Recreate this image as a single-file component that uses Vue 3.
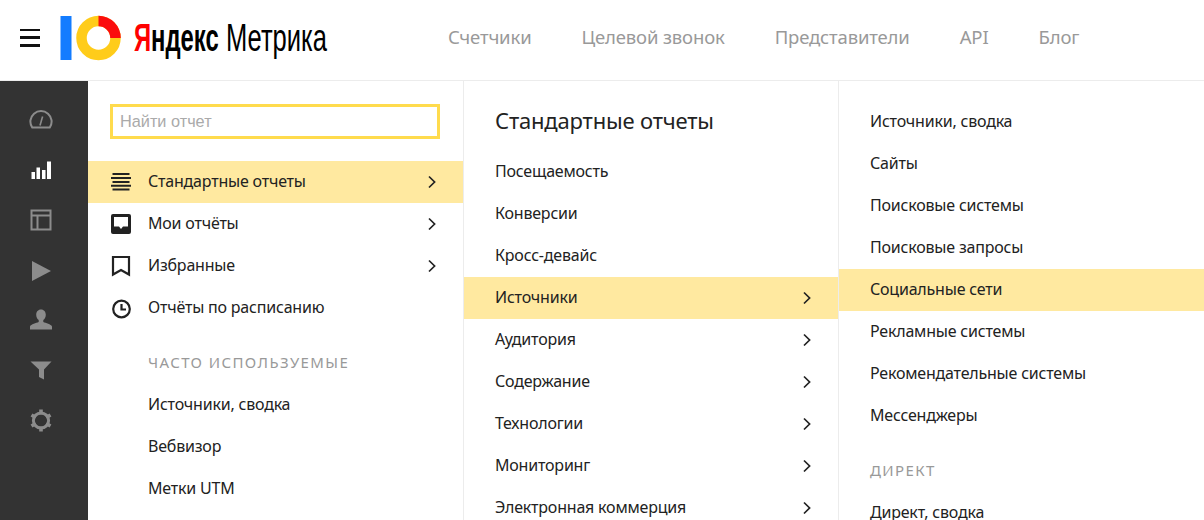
<template>
  <div class="page">
    <header class="top">
      <button class="burger" aria-label="Меню"><span></span><span></span><span></span></button>
      <div class="logo">
        <svg width="62" height="46" viewBox="0 0 62 46">
          <rect x="0.5" y="1" width="11" height="44" fill="#137cff" />
          <circle cx="38.5" cy="23" r="17" fill="none" stroke="#ffcc1a" stroke-width="10.5" />
          <path d="M38.5 0.7A22.3 22.3 0 0 1 60.8 23H50.2A11.7 11.7 0 0 0 38.5 11.3Z" fill="#fb0d0d" />
        </svg>
        <div class="wordmark">
          <span class="ya"><i>Я</i>ндекс</span>
          <span class="metrika">Метрика</span>
        </div>
      </div>
      <nav class="nav">
        <a v-for="item in navItems" :key="item">{{ item }}</a>
      </nav>
    </header>

    <div class="body">
      <aside class="rail">
        <div v-for="(icon, i) in railIcons" :key="i" class="rail-item" :class="{ active: i === 1 }">
          <svg width="24" height="24" viewBox="0 0 24 24" v-html="icon"></svg>
        </div>
      </aside>

      <section class="col col-1">
        <div class="search"><input type="text" placeholder="Найти отчет" /></div>
        <div v-for="row in mainRows" :key="row.label" class="row" :class="{ on: row.on }">
          <svg class="row-icon" width="22" height="22" viewBox="0 0 22 22" v-html="row.icon"></svg>
          <span>{{ row.label }}</span>
          <svg v-if="row.arrow" class="chev" width="10" height="14" viewBox="0 0 10 14"><path d="M2 1.5 7.6 7 2 12.5" /></svg>
        </div>
        <h4 class="caption caption-1">Часто используемые</h4>
        <div v-for="label in frequent" :key="label" class="row"><span>{{ label }}</span></div>
      </section>

      <section class="col col-2">
        <h2>Стандартные отчеты</h2>
        <div v-for="row in reports" :key="row.label" class="row" :class="{ on: row.on }">
          <span>{{ row.label }}</span>
          <svg v-if="row.arrow" class="chev" width="10" height="14" viewBox="0 0 10 14"><path d="M2 1.5 7.6 7 2 12.5" /></svg>
        </div>
      </section>

      <section class="col col-3">
        <div v-for="label in sources" :key="label" class="row" :class="{ on: label === 'Социальные сети' }"><span>{{ label }}</span></div>
        <h4 class="caption caption-3">Директ</h4>
        <div class="row"><span>Директ, сводка</span></div>
      </section>
    </div>
  </div>
</template>

<script setup>
const navItems = ['Счетчики', 'Целевой звонок', 'Представители', 'API', 'Блог']

const railIcons = [
  '<path d="M3.200 19.500a10.600 10.600 0 1 1 17.600 0Z" fill="none" stroke="#8c8c8c" stroke-width="2"/><path d="M11 17.500 13.600 8.500" stroke="#8c8c8c" stroke-width="1.600"/>',
  '<path d="M2.500 14h3.500v7H2.500zM7.500 9.500H11V21H7.500zM13 12h3.500v9H13zM18 3.500h4V21h-4z" fill="#fff"/>',
  '<path d="M2.500 2.500h19v19h-19zM2.500 7.500h19M8.500 7.500v14" fill="none" stroke="#8c8c8c" stroke-width="2"/>',
  '<path d="M3 3 22 13 3 23Z" fill="#8c8c8c"/>',
  '<path d="M12 1.500c3 0 4.800 2.300 4.800 5.200 0 2.400-1.200 4.400-2.500 5.400v2c2.500 1 7.700 2.200 8.700 4.300V21.500H1v-3.100c1-2.100 6.200-3.300 8.700-4.300v-2C8.400 11.100 7.200 9.100 7.200 6.700c0-2.900 1.800-5.200 4.800-5.200Z" fill="#8c8c8c"/>',
  '<path d="M1.500 3.500h21l-7.500 8v10l-5-2.500v-7.500Z" fill="#8c8c8c"/>',
  '<circle cx="12" cy="12.500" r="7.600" fill="none" stroke="#8c8c8c" stroke-width="3"/><path d="M12 1.500v5M12 18.500v5M2.500 7l4.300 2.500M17.200 15.500l4.300 2.500M2.500 18l4.300-2.500M17.200 9.500 21.500 7" stroke="#8c8c8c" stroke-width="3.600"/>'
]

const mainRows = [
  { label: 'Стандартные отчеты', on: true, arrow: true, icon: '<path d="M2.500 3h17M1 7h20M2.500 11h17M1 14.800h20M2.500 18.600h17" stroke="#222" stroke-width="2"/>' },
  { label: 'Мои отчёты', arrow: true, icon: '<path fill-rule="evenodd" d="M3 1h16a2 2 0 0 1 2 2v16a2 2 0 0 1-2 2H3a2 2 0 0 1-2-2V3a2 2 0 0 1 2-2Zm1 3v9.500h5l2 2.500 2-2.500h5V4Z" fill="#222"/>' },
  { label: 'Избранные', arrow: true, icon: '<path d="M3 2h16v17.500L11 15l-8 4.500Z" fill="none" stroke="#222" stroke-width="2.200"/>' },
  { label: 'Отчёты по расписанию', icon: '<circle cx="11.500" cy="12" r="8.300" fill="none" stroke="#222" stroke-width="2.200"/><path d="M11.500 7v5.500h4.500" fill="none" stroke="#222" stroke-width="2.200"/>' }
]

const frequent = ['Источники, сводка', 'Вебвизор', 'Метки UTM']

const reports = [
  { label: 'Посещаемость' },
  { label: 'Конверсии' },
  { label: 'Кросс-девайс' },
  { label: 'Источники', arrow: true, on: true },
  { label: 'Аудитория', arrow: true },
  { label: 'Содержание', arrow: true },
  { label: 'Технологии', arrow: true },
  { label: 'Мониторинг', arrow: true },
  { label: 'Электронная коммерция', arrow: true }
]

const sources = [
  'Источники, сводка',
  'Сайты',
  'Поисковые системы',
  'Поисковые запросы',
  'Социальные сети',
  'Рекламные системы',
  'Рекомендательные системы',
  'Мессенджеры'
]
</script>

<style>
html, body { margin: 0; background: #fff; overflow: hidden; }
</style>

<style scoped>
.page {
  width: 1204px;
  height: 520px;
  overflow: hidden;
  font-family: "Noto Sans", "Open Sans", sans-serif;
  color: #222;
  background: #fff;
}

.top {
  height: 75px;
  padding-bottom: 5px;
  border-bottom: 1px solid #ececec;
  display: flex;
  align-items: center;
}

.burger {
  width: 20px;
  height: 18px;
  margin-left: 20px;
  padding: 0;
  border: 0;
  background: none;
  display: flex;
  flex-direction: column;
  justify-content: space-between;
}

.burger span {
  height: 2.500px;
  background: #111;
}

.logo {
  margin-left: 20px;
  display: flex;
  align-items: center;
  gap: 12px;
}

.wordmark {
  width: 193px;
  height: 46px;
  display: flex;
  align-items: center;
  gap: 8px;
  white-space: nowrap;
  font-family: "Liberation Sans Narrow", "Liberation Sans", sans-serif;
  font-size: 39px;
  line-height: 46px;
  color: #000;
}

.ya,
.metrika {
  display: block;
  flex: none;
  transform-origin: left center;
}

.ya { width: 84px; font-weight: 700; transform: scaleX(0.61); }
.ya i { font-style: normal; color: #f00; }
.metrika { width: 101px; transform: scaleX(0.655); }

.nav {
  margin-left: 121px;
  margin-bottom: 2px;
  display: flex;
  gap: 50px;
  font-size: 18.500px;
  letter-spacing: -0.15px;
  color: #999;
}

.body {
  height: 439px;
  display: flex;
}

.rail {
  width: 88px;
  flex: none;
  background: #333;
  padding-top: 14px;
  box-sizing: border-box;
}

.rail-item {
  height: 50px;
  display: flex;
  align-items: center;
  justify-content: center;
  margin-left: -7px;
}

.col {
  height: 439px;
  overflow: hidden;
  box-sizing: border-box;
  border-right: 1px solid #ececec;
}

.col-1 { width: 376px; }
.col-2 { width: 375px; }
.col-3 { width: 365px; border-right: 0; padding-top: 20px; }

.search {
  padding: 23px 22px 0;
  height: 80px;
  box-sizing: border-box;
}

.search input {
  display: block;
  width: 330px;
  height: 35px;
  box-sizing: border-box;
  border: 3px solid #ffdb4d;
  outline: 0;
  padding: 0 7px;
  font-family: "Liberation Sans", sans-serif;
  font-size: 16.300px;
}

.search input::placeholder {
  color: #aaa;
  opacity: 1;
}

.row {
  height: 42px;
  box-sizing: border-box;
  padding-bottom: 2px;
  display: flex;
  align-items: center;
  font-size: 16px;
  letter-spacing: -0.2px;
  padding-left: 60px;
  position: relative;
}

.col-2 .row,
.col-3 .row { padding-left: 31px; }

.row.on { background: #ffe9a0; }

.row-icon {
  position: absolute;
  left: 22px;
  top: 10px;
}

.chev {
  position: absolute;
  right: 26px;
  top: 14px;
  fill: none;
  stroke: #222;
  stroke-width: 1.700;
}

.caption {
  margin: 0;
  font-weight: 400;
  font-size: 15px;
  line-height: 22px;
  letter-spacing: 1.400px;
  text-transform: uppercase;
  color: #999;
  box-sizing: border-box;
  padding-left: 60px;
}

.caption-1 { padding-top: 22px; height: 55px; }
.caption-3 { padding-left: 31px; padding-top: 22px; height: 55px; }

h2 {
  margin: 0;
  height: 70px;
  box-sizing: border-box;
  padding: 24px 0 0 31px;
  font-size: 22px;
  letter-spacing: -0.17px;
  line-height: 30px;
  font-weight: 400;
  color: #222;
}
</style>
